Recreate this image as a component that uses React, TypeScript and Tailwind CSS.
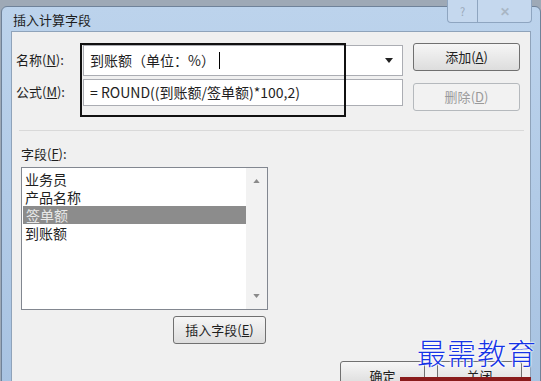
import React from 'react';

const font = { fontFamily: '"Noto Sans CJK SC", "Noto Sans", sans-serif' };

// Classic Windows 7 style push button
const Button: React.FC<{ label: string; hotkey: string; disabled?: boolean; className?: string }> = ({
  label, hotkey, disabled, className = '',
}) => (
  <div
    className={`flex items-center justify-center rounded-[3px] border text-[13px] ${
      disabled
        ? 'border-[#b5b9bd] bg-[#f2f2f2] text-[#9a9a9a]'
        : 'border-[#707070] bg-gradient-to-b from-[#f6f6f6] to-[#dddddd] text-[#222]'
    } ${className}`}
  >
    {label}(<span className="underline">{hotkey}</span>)
  </div>
);

const TriangleDown: React.FC<{ className?: string }> = ({ className }) => (
  <svg className={className} viewBox="0 0 8 5" fill="currentColor">
    <path d="M0 0h8L4 5z" />
  </svg>
);

const TriangleUp: React.FC<{ className?: string }> = ({ className }) => (
  <svg className={className} viewBox="0 0 8 5" fill="currentColor">
    <path d="M0 5h8L4 0z" />
  </svg>
);

const fields = ['业务员', '产品名称', '签单额', '到账额'];

export default function App() {
  return (
    <div className="relative h-[381px] w-[541px] overflow-hidden bg-[#9ea9b6]" style={font}>
      {/* window frame */}
      <div className="ml-[1px] mt-[6px] flex h-[380px] w-[540px] flex-col rounded-t-[6px] border border-[#6f8299] bg-gradient-to-b from-[#bcd3ec] to-[#a8c3e2] px-[9px]">
        {/* title bar */}
        <div className="relative flex h-[27px] items-center pl-[2px] pt-[2px] text-[13px] text-[#1e1e1e]">
          插入计算字段
          <div className="absolute -top-[7px] right-[-1px] flex h-[23px]">
            <div className="flex w-[31px] items-center justify-center rounded-bl-[4px] border border-t-0 border-[#8ea5c0] bg-[#c5d8ee] text-[11px] text-[#9aa8b8]">
              ?
            </div>
            <div className="flex w-[54px] items-center justify-center rounded-br-[4px] border border-l-0 border-t-0 border-[#8ea5c0] bg-[#c5d8ee] text-[12px] font-bold text-[#a9b6c4]">
              ✕
            </div>
          </div>
        </div>

        {/* client area */}
        <div className="flex flex-1 flex-col border border-b-0 border-[#8fa3ba] bg-[#f0f0f0] text-[13px] text-[#1e1e1e]">
          <div className="flex pl-[4px] pt-[11px]">
            <div className="flex flex-col">
              <div className="flex items-center pt-[2px]">
                <span className="w-[67px]">名称(<span className="underline">N</span>):</span>
                <div className="flex h-[31px] w-[320px] items-center border border-[#abadb3] bg-white pl-[6px] text-[14px]">
                  <span>到账额（单位：%）</span>
                  <span className="ml-[4px] h-[17px] w-px bg-black" />
                  <TriangleDown className="ml-auto mr-[9px] h-[5px] w-[8px] text-[#222]" />
                </div>
              </div>
              <div className="mt-[3px] flex items-center">
                <span className="w-[67px]">公式(<span className="underline">M</span>):</span>
                <div className="flex h-[27px] w-[320px] items-center border border-[#abadb3] bg-white pl-[6px] text-[14px]">
                  = ROUND((到账额/签单额)*100,2)
                </div>
              </div>
            </div>
            <div className="ml-[10px] flex flex-col">
              <Button label="添加" hotkey="A" className="h-[28px] w-[107px]" />
              <Button label="删除" hotkey="D" disabled className="mt-[12px] h-[28px] w-[107px]" />
            </div>
          </div>

          <div className="ml-[7px] mr-[6px] mt-[19px] h-px bg-[#d9d9d9]" />

          <div className="pl-[9px] pt-[13px]">
            <div>字段(<span className="underline">F</span>):</div>
            <div className="mt-[4px] flex h-[143px] w-[247px] border border-[#828790] bg-white">
              <div className="flex flex-1 flex-col pt-[2px] text-[14px] leading-[18px]">
                {fields.map((f, i) => (
                  <div
                    key={f}
                    className={`h-[18px] pl-[3px] ${i === 2 ? 'ml-px bg-[#8c8c8c] text-[#e8e8e8]' : ''}`}
                  >
                    {f}
                  </div>
                ))}
              </div>
              <div className="flex w-[21px] flex-col items-center justify-between bg-[#f2f2f2] py-[11px]">
                <TriangleUp className="h-[4px] w-[7px] text-[#8a8a8a]" />
                <TriangleDown className="h-[4px] w-[7px] text-[#8a8a8a]" />
              </div>
            </div>
            <div className="mt-[6px] flex w-[245px] justify-end">
              <div className="flex h-[28px] w-[93px] items-center justify-center rounded-[3px] border border-[#707070] bg-gradient-to-b from-[#f6f6f6] to-[#dddddd]">
                插入字段(<span className="underline">E</span>)
              </div>
            </div>
          </div>

          <div className="mt-[17px] flex justify-end gap-[12px] pr-[8px]">
            <div className="flex h-[24px] w-[85px] items-start justify-center rounded-[3px] border border-[#707070] bg-gradient-to-b from-[#f6f6f6] to-[#dddddd] pt-[4px]">
              确定
            </div>
            <div className="flex h-[24px] w-[85px] items-start justify-center rounded-[3px] border border-[#707070] bg-gradient-to-b from-[#f6f6f6] to-[#dddddd] pt-[4px]">
              关闭
            </div>
          </div>
        </div>
      </div>

      {/* annotation highlight */}
      <div className="absolute left-[80px] top-[43px] h-[74px] w-[266px] border-2 border-[#111]" />

      {/* watermark */}
      <div
        className="absolute left-[417px] top-[331px] text-[29px] font-light tracking-[1px] text-[#1533e6]"
        style={{ textShadow: '0 0 2px #fff, 0 0 2px #fff, 0 0 2px #fff' }}
      >
        最需教育
      </div>

      {/* red bar at bottom */}
      <div className="absolute left-[400px] top-[377px] h-[4px] w-[131px] bg-[#8a1c1c]" />
    </div>
  );
}
